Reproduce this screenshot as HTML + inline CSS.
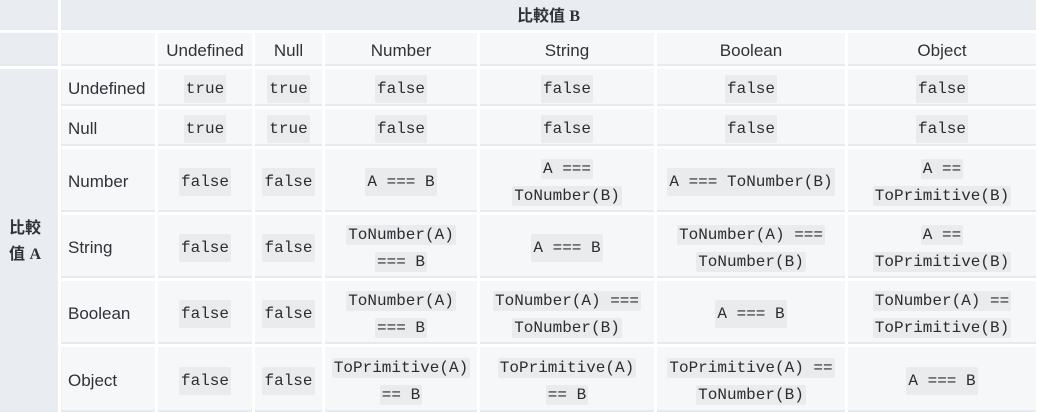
<!DOCTYPE html>
<html><head><meta charset="utf-8"><style>
html,body{margin:0;padding:0;background:#fff;width:1038px;height:412px;overflow:hidden}
.g{display:grid;grid-template-columns:58px 94px 94px 67px 152px 174px 188px 188px;grid-template-rows:30px 33px 37px 37px 63px 63px 63px 65px;gap:3px;width:1036px;font-family:"Liberation Sans","Noto Sans CJK TC",sans-serif;font-size:17px;color:#2f3337}
.g>div{background:#f6f7f9;display:flex;align-items:center;justify-content:center;text-align:center;box-shadow:inset 0 -2px 0 #e6eaef;line-height:26px;padding-top:3px;box-sizing:border-box}
.g>div.h{background:#e9ecf0}
.g>div.l{justify-content:flex-start;padding-left:7px}
code{font-family:"Liberation Mono",monospace;font-size:16px;background:#eaebed;padding:1px 2px;border-radius:2px;color:#2a2d31}
b{font-weight:bold;font-size:16px}
.s{font-family:"Liberation Serif",serif}
</style></head><body><div class="g">
<div class="h"></div><div class="h" style="grid-column:2/9"><b>比較值 <span class="s">B</span></b></div>
<div class="h"></div><div></div><div>Undefined</div><div>Null</div><div>Number</div><div>String</div><div>Boolean</div><div>Object</div>
<div class="h" style="grid-row:3/9;justify-content:flex-start;padding-left:9px;text-align:left"><b>比較<br>值 <span class="s">A</span></b></div>
<div class="l">Undefined</div><div><code>true</code></div><div><code>true</code></div><div><code>false</code></div><div><code>false</code></div><div><code>false</code></div><div><code>false</code></div>
<div class="l">Null</div><div><code>true</code></div><div><code>true</code></div><div><code>false</code></div><div><code>false</code></div><div><code>false</code></div><div><code>false</code></div>
<div class="l">Number</div><div><code>false</code></div><div><code>false</code></div><div><code>A === B</code></div><div><span><code>A ===</code><br><code>ToNumber(B)</code></span></div><div><code>A === ToNumber(B)</code></div><div><span><code>A ==</code><br><code>ToPrimitive(B)</code></span></div>
<div class="l">String</div><div><code>false</code></div><div><code>false</code></div><div><span><code>ToNumber(A)</code><br><code>=== B</code></span></div><div><code>A === B</code></div><div><span><code>ToNumber(A) ===</code><br><code>ToNumber(B)</code></span></div><div><span><code>A ==</code><br><code>ToPrimitive(B)</code></span></div>
<div class="l">Boolean</div><div><code>false</code></div><div><code>false</code></div><div><span><code>ToNumber(A)</code><br><code>=== B</code></span></div><div><span><code>ToNumber(A) ===</code><br><code>ToNumber(B)</code></span></div><div><code>A === B</code></div><div><span><code>ToNumber(A) ==</code><br><code>ToPrimitive(B)</code></span></div>
<div class="l">Object</div><div><code>false</code></div><div><code>false</code></div><div><span><code>ToPrimitive(A)</code><br><code>== B</code></span></div><div><span><code>ToPrimitive(A)</code><br><code>== B</code></span></div><div><span><code>ToPrimitive(A) ==</code><br><code>ToNumber(B)</code></span></div><div><code>A === B</code></div>
</div></body></html>
